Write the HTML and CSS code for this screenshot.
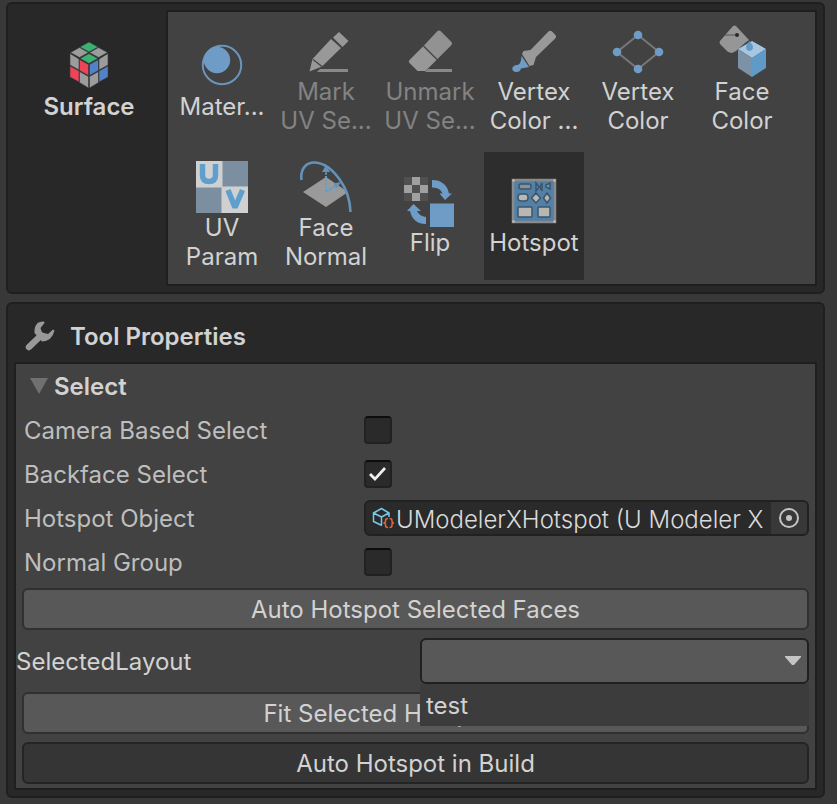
FILE: index.html
```html
<!DOCTYPE html>
<html lang="en">
<head>
<meta charset="utf-8">
<title>Surface Tools</title>
<link rel="stylesheet" href="styles.css">
</head>
<body>
<main class="editor">
  <section class="panel toolbox">
    <div class="category">
      <svg class="icon" viewBox="0 0 52 52" aria-hidden="true">
        <g stroke="#3a3a3a" stroke-width=".6">
          <path fill="#3bb273" d="M26 2l9 5-9 5-9-5z"/>
          <path fill="#9c9c9c" d="M16.500 7.500l9 5-9 5-9-5z"/>
          <path fill="#9c9c9c" d="M35.500 7.500l9 5-9 5-9-5z"/>
          <path fill="#3bb273" d="M26 13.500l9 5-9 5-9-5z"/>
          <path fill="#9c9c9c" d="M7 13.500l9 5.500v11l-9-5z"/>
          <path fill="#ec4458" d="M16.500 19.500l9 5v11l-9-5z"/>
          <path fill="#ec4458" d="M7 26l9 5v11l-9-5z"/>
          <path fill="#9c9c9c" d="M16.500 31.500l9 5v11.500l-9-5.500z"/>
          <path fill="#5482c8" d="M26.500 24.500l9-5v11l-9 5z"/>
          <path fill="#9c9c9c" d="M36 19l9-5.500v11.500l-9 5z"/>
          <path fill="#9c9c9c" d="M26.500 36.500l9-5v11l-9 5.500z"/>
          <path fill="#5482c8" d="M36 31l9-5v11l-9 5z"/>
        </g>
      </svg>
      <span>Surface</span>
    </div>
    <div class="tools">
      <button class="tool" type="button">
        <svg class="icon" viewBox="0 0 52 52" aria-hidden="true">
          <circle cx="26" cy="25" r="19.200" fill="none" stroke="#6a95bb" stroke-width="2"/>
          <circle cx="21" cy="20" r="13.200" fill="#6f9cc6"/>
        </svg>
        <span>Mater...</span>
      </button>
      <button class="tool" type="button" disabled>
        <svg class="icon" viewBox="0 0 52 52" aria-hidden="true">
          <path fill="#989898" d="M9.500 46.500L12.500 34 31 14l10 9-19 18.500zM33 12.500l6-5.500 9.500 9-6 6z"/>
          <path fill="none" stroke="#424242" stroke-width="1.200" d="M13 34.500l9 7"/>
          <path fill="#898989" d="M20 44h28v3H17z"/>
        </svg>
        <span>Mark<br>UV Se...</span>
      </button>
      <button class="tool" type="button" disabled>
        <svg class="icon" viewBox="0 0 52 52" aria-hidden="true">
          <path fill="#929292" d="M19.500 21L33 6.500q2-2 4 0L47 16.500q2 2 0 4L33 34.500z"/>
          <path fill="#989898" d="M19.500 21L33 34.500 21.500 46H13.500L5.500 38q-1.500-1.500 0-3z"/>
          <path stroke="#4a4a4a" stroke-width="1.500" d="M19.500 21L33 34.500"/>
          <path fill="#898989" d="M24 44h24v3H21z"/>
        </svg>
        <span>Unmark<br>UV Se...</span>
      </button>
      <button class="tool" type="button">
        <svg class="icon" viewBox="0 0 52 52" aria-hidden="true">
          <path fill="#999" d="M40 7q2-2 4-.500l3 3q2 2 .200 4L28 32l-2.500 8-4 1L14 29l1.500-3 7-1z"/>
          <path fill="#6f9cc6" d="M13.500 31l7.500 11-8 1.500q-1 4-5.500 3.500-4-1-3-4.500 1.500-3 4.500-2.500 4 0 4.500-9z"/>
        </svg>
        <span>Vertex<br>Color ...</span>
      </button>
      <button class="tool" type="button">
        <svg class="icon" viewBox="0 0 52 52" aria-hidden="true">
          <path fill="none" stroke="#777" stroke-width="2" d="M26 10l21 17-21 17L5 27z"/>
          <g fill="#6f9cc6"><circle cx="26" cy="10" r="4.300"/><circle cx="47" cy="27" r="4.300"/><circle cx="26" cy="44" r="4.300"/><circle cx="5" cy="27" r="4.300"/></g>
        </svg>
        <span>Vertex<br>Color</span>
      </button>
      <button class="tool" type="button">
        <svg class="icon" viewBox="0 0 52 52" aria-hidden="true">
          <path fill="#969696" d="M17 1q1.500-1 3 0l13 14-4 3-9 8-4 2-4-1-8-8q-1-2 0-3z"/>
          <path fill="none" stroke="#555" stroke-width="1" d="M8 10h12"/>
          <circle cx="21" cy="10" r="2" fill="#292929"/>
          <path fill="#a9c6e1" d="M36 16l14 8-14 9-14-9z"/>
          <path fill="#7c93a7" d="M22 24l14 9v19l-14-9z"/>
          <path fill="#609bc8" d="M50 24l-14 9v19l14-9z"/>
          <path fill="#609bc8" d="M33.500 16l3 4q2 5-3 6-5-1-3-6z"/>
        </svg>
        <span>Face<br>Color</span>
      </button>
      <button class="tool" type="button">
        <svg class="icon" viewBox="0 0 52 52" aria-hidden="true">
          <path fill="#d0d0d0" d="M0 0h52v52H0z"/>
          <path fill="#7b8fa0" d="M26.500 0H52v25.500H26.500zM0 26.500h25.500V52H0z"/>
          <path fill="none" stroke="#5f9fce" stroke-width="5.500" d="M6.500 3v11q0 6.500 6.500 6.500t6.500-6.500V3"/>
          <path fill="none" stroke="#5f9fce" stroke-width="5.500" stroke-linejoin="bevel" d="M32 29l7 17.500L46.500 29"/>
        </svg>
        <span>UV<br>Param</span>
      </button>
      <button class="tool" type="button">
        <svg class="icon" viewBox="0 0 52 52" aria-hidden="true">
          <path fill="#9a9a9a" d="M26 16l22 15-22 15L3 31z"/>
          <path fill="none" stroke="#6592b8" stroke-width="2.600" d="M1.500 19C0 7 7 1 15 1.500 25 2 33 9 40 19c5 7 10 18 10.500 32"/>
          <path fill="none" stroke="#5f9fce" stroke-width="2" stroke-dasharray="2 1.500" d="M26 31V9"/>
          <path fill="none" stroke="#5f9fce" stroke-width="2.500" stroke-dasharray="3 1" d="M26 31l11-7"/>
          <path fill="#6592b8" d="M26 4l4 7h-8zM41 21l-4 6.500-4-5z"/>
        </svg>
        <span>Face<br>Normal</span>
      </button>
      <button class="tool" type="button">
        <svg class="icon" viewBox="0 0 52 52" aria-hidden="true">
          <path fill="#505050" d="M0 1h24v24H0z"/>
          <path fill="#a0a0a0" d="M8 1h8v8H8zM0 9h8v8H0zM16 9h8v8h-8zM8 17h8v8H8z"/>
          <path fill="#6f9cc6" d="M26 27.500h24v23.500H26zM28 4q14 0 17 13.500h3L41 24l-5.500-6.500h3Q36 11 28 11.500zM22 48Q9 48 6 35H3l6.500-7L17 35h-4q2 5 9 6z"/>
        </svg>
        <span>Flip</span>
      </button>
      <button class="tool tool-active" type="button" aria-pressed="true">
        <svg class="icon" viewBox="0 0 52 52" aria-hidden="true">
          <rect x="5" y="4" width="42" height="42" fill="#5480a5" stroke="#8b8b8b" stroke-width="2.500"/>
          <g fill="#8c9093" stroke="#385570" stroke-width="1.500">
            <rect x="11" y="8" width="12" height="5" rx="2"/>
            <path d="M28 7l3 4-3 4zM34 7l-2 4 2 4zM38 9l4-2v6l-4-2z"/>
            <rect x="10" y="18" width="10" height="7" rx="3" fill="#b9b7b2"/>
            <path fill="#b9b7b2" d="M28 17l4.500 5-4.500 5-4.500-5zM39 17l3.500 5-3.500 5-3.500-5z"/>
            <rect x="10" y="31" width="14" height="10" rx="1" fill="#b9b7b2"/>
            <rect x="30" y="31" width="12" height="10" rx="1" fill="#b9b7b2"/>
          </g>
          <g fill="#c0c0c0"><circle cx="5.500" cy="4.500" r="1.200"/><circle cx="46.500" cy="4.500" r="1.200"/><circle cx="5.500" cy="45.500" r="1.200"/><circle cx="46.500" cy="45.500" r="1.200"/></g>
        </svg>
        <span>Hotspot</span>
      </button>
    </div>
  </section>

  <section class="panel">
    <h1 class="panel-title">
      <svg class="wrench" viewBox="0 0 32 32" aria-hidden="true">
        <path fill="none" stroke="#999" stroke-width="6.500" stroke-linecap="round" d="M5 27L17 15.500"/>
        <path fill="#999" d="M20 1.500Q10 1 10.500 13L18 21.500Q28 21 30.500 10.500L29 9.500 24 14 18 12.500 16.500 8 20.500 3z"/>
      </svg>
      Tool Properties
    </h1>
    <div class="properties">
      <h2 class="group-title">
        <svg class="fold" viewBox="0 0 18 16" aria-hidden="true"><path fill="#707070" d="M0 0h18L9 16z"/></svg>
        Select
      </h2>
      <div class="row"><label for="camera">Camera Based Select</label><input class="check" id="camera" type="checkbox"></div>
      <div class="row"><label for="backface">Backface Select</label><input class="check" id="backface" type="checkbox" checked></div>
      <div class="row">
        <label for="object">Hotspot Object</label>
        <div class="object-field">
          <svg class="object-icon" viewBox="0 0 22 22" aria-hidden="true">
            <path fill="none" stroke="#78c8ea" stroke-width="1.500" stroke-linejoin="round" d="M10 18.500L1.500 14.500V6L9.500 1.500 17 6v4M1.500 6l8 4L17 6M9.500 10v8"/>
            <path fill="none" stroke="#e8643c" stroke-width="1.500" d="M16 11.500q-2.500 0-2.500 2v1.500l-1.500 1 1.500 1v1.500q0 2 2.500 2M17.500 11.500q2.500 0 2.500 2v1.500l1.500 1-1.500 1v1.500q0 2-2.500 2"/>
          </svg>
          <input class="object-name" id="object" type="text" readonly value="UModelerXHotspot (U Modeler X Hotspot)">
          <button class="picker" type="button" aria-label="Pick object">
            <svg viewBox="0 0 20 20" aria-hidden="true"><circle cx="10" cy="10" r="9" fill="none" stroke="#c4c4c4" stroke-width="2"/><circle cx="10" cy="10" r="3" fill="#c4c4c4"/></svg>
          </button>
        </div>
      </div>
      <div class="row"><label for="normal">Normal Group</label><input class="check" id="normal" type="checkbox"></div>
      <div class="actions">
        <button class="action" type="button">Auto Hotspot Selected Faces</button>
        <div class="layout-row">
          <label for="layout">SelectedLayout</label>
          <div class="dropdown">
            <select id="layout"><option value="" selected></option><option value="test">test</option></select>
            <svg class="arrow" viewBox="0 0 16 9" aria-hidden="true"><path fill="#c4c4c4" d="M0 0h16v1L9 9H7L0 1z"/></svg>
            <ul class="menu"><li>test</li></ul>
          </div>
        </div>
        <button class="action" type="button">Fit Selected Hotspot Faces</button>
        <button class="action action-on" type="button">Auto Hotspot in Build</button>
      </div>
    </div>
  </section>
</main>
</body>
</html>
```

FILE: styles.css
```css
* { box-sizing: border-box; }

body {
  margin: 0;
  background: #383838;
  color: #d2d2d2;
  font: 400 24px/29px Inter, "Liberation Sans", sans-serif;
}

button, input, select { font: inherit; color: inherit; }

.editor {
  display: flex;
  flex-direction: column;
  gap: 8px;
  padding: 2px 12px 6px 6px;
}

.panel {
  padding: 6px;
  background: #282828;
  border: 2px solid #1f1f1f;
  border-radius: 6px;
}

.toolbox { display: flex; }

.category, .tool {
  display: flex;
  flex-direction: column;
  align-items: center;
  justify-content: center;
}

.category {
  flex: 0 0 152px;
  height: 140px;
  padding-right: 2px;
  font-weight: 600;
}

.icon { display: block; width: 52px; height: 52px; }

.tools {
  flex: 1;
  display: flex;
  flex-wrap: wrap;
  gap: 8px 4px;
  padding: 4px;
  background: #424242;
  border: 2px solid #1f1f1f;
}

.tool {
  width: 100px;
  height: 128px;
  padding: 0;
  border: 0;
  background: none;
  white-space: nowrap;
}

.tool:disabled { color: #838383; }
.tool-active { background: #2d2d2d; }

.panel-title, .group-title {
  display: flex;
  align-items: center;
  margin: 0;
  font-size: 24px;
  font-weight: 600;
}

.panel-title { height: 52px; gap: 14px; padding: 0 10px; }
.wrench { width: 32px; height: 32px; }

.properties {
  background: #424242;
  border: 2px solid #1f1f1f;
}

.group-title { height: 44px; gap: 6px; padding-left: 14px; }
.fold { width: 18px; height: 16px; }

.row {
  display: grid;
  grid-template-columns: 340px 1fr;
  align-items: center;
  height: 44px;
  padding: 0 6px 0 8px;
  color: #bebebe;
}

.check {
  appearance: none;
  width: 28px;
  height: 28px;
  margin: 0;
  background: #2a2a2a;
  border: 2px solid #212121;
  border-top-color: #0d0d0d;
  border-radius: 4px;
}

.check:checked::before {
  content: "";
  display: block;
  width: 24px;
  height: 24px;
  background: #eee;
  clip-path: polygon(3px 13px, 5px 11px, 9px 15px, 18px 5px, 20px 7px, 9px 19px);
}

.object-field {
  display: flex;
  align-items: center;
  height: 36px;
  overflow: hidden;
  background: #2a2a2a;
  border: 2px solid #212121;
  border-radius: 6px;
}

.object-icon { flex: none; width: 22px; height: 22px; margin-left: 6px; }

.object-name {
  flex: 1;
  min-width: 0;
  height: 32px;
  padding: 2px 0 0 2px;
  border: 0;
  outline: 0;
  background: none;
  color: #dadada;
  font-weight: 300;
}

.picker {
  display: flex;
  align-items: center;
  justify-content: center;
  width: 36px;
  height: 32px;
  padding: 0;
  border: 0;
  background: #383838;
}

.picker svg { width: 20px; height: 20px; }

.actions {
  display: flex;
  flex-direction: column;
  gap: 8px;
  padding: 4px 6px;
}

.action {
  height: 42px;
  padding: 0;
  background: #585858;
  border: 2px solid #303030;
  border-radius: 6px;
}

.action-on { background: #353535; border-color: #242424; }

.layout-row {
  display: grid;
  grid-template-columns: 404px 1fr;
  align-items: center;
  margin-left: -6px;
}

.dropdown { position: relative; }

.dropdown select {
  display: block;
  appearance: none;
  width: 100%;
  height: 46px;
  padding: 0 32px 0 6px;
  background: #585858;
  border: 2px solid #202020;
  border-radius: 6px;
}

.arrow {
  position: absolute;
  top: 18px;
  right: 8px;
  width: 16px;
  height: 9px;
  pointer-events: none;
}

.menu {
  position: absolute;
  top: 100%;
  left: 0;
  right: 0;
  z-index: 1;
  height: 42px;
  margin: 0;
  padding: 7px 6px;
  background: #3c3c3c;
  list-style: none;
}
```
